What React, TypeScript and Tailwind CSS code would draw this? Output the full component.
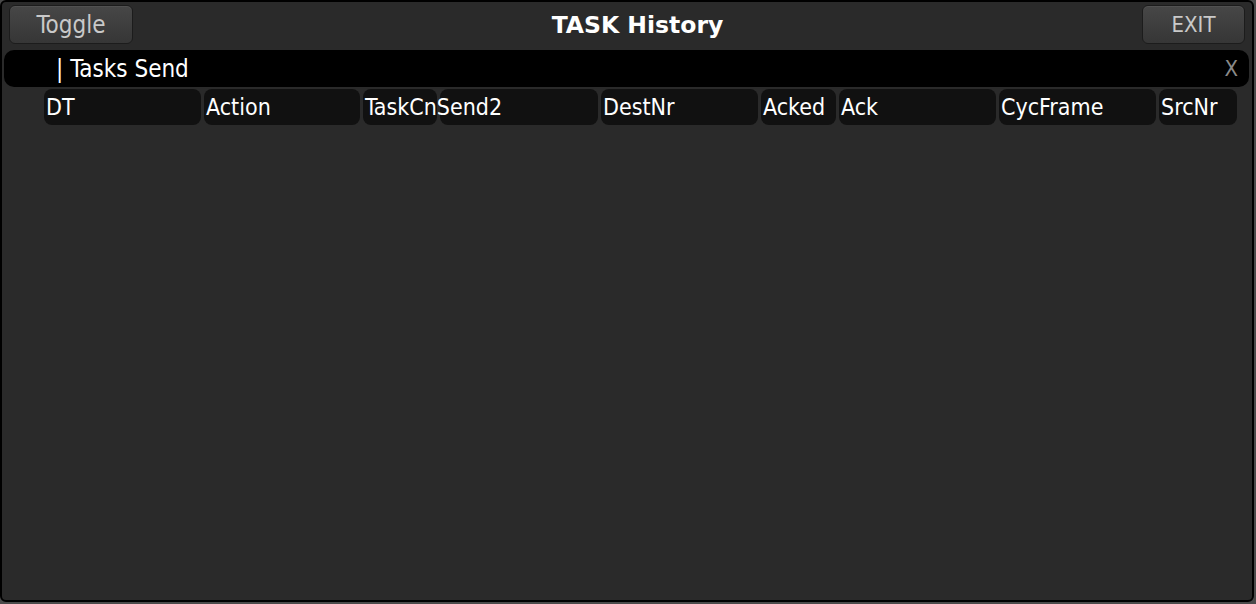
const COLUMNS = [
  { label: "DT", width: "w-[157px]" },
  { label: "Action", width: "w-[156px]" },
  { label: "TaskCnSend2", width: "w-[74px]" },
  { label: "", width: "w-[158px]" },
  { label: "DestNr", width: "w-[157px]" },
  { label: "Acked", width: "w-[75px]" },
  { label: "Ack", width: "w-[157px]" },
  { label: "CycFrame", width: "w-[157px]" },
  { label: "SrcNr", width: "w-[78px]" },
];

const FONT = "font-['DejaVu_Sans_Condensed','DejaVu_Sans',sans-serif]";

function ToolButton({
  label,
  width,
  size,
}: {
  label: string;
  width: string;
  size: string;
}) {
  return (
    <button
      className={`${width} ${size} h-[39px] shrink-0 rounded-md border border-[#1c1c1c] bg-gradient-to-b from-[#474747] to-[#363636] text-[#c9c9c9] shadow-[inset_0_1px_0_rgba(255,255,255,0.06)] ${FONT}`}
    >
      {label}
    </button>
  );
}

export default function App() {
  return (
    <div className="h-[604px] w-[1256px] overflow-hidden bg-[#4a4a4a]">
      <div className="flex h-[602px] w-[1254px] flex-col rounded-md border-2 border-black bg-[#2a2a2a]">
        <header className="flex h-[48px] items-start px-[7px] pt-[3px]">
          <ToolButton label="Toggle" width="w-[124px]" size="text-[24px]" />
          <h1 className="flex h-[39px] flex-1 items-center justify-center pt-[3px] font-['DejaVu_Sans',sans-serif] text-[23.5px] font-bold text-white">
            TASK History
          </h1>
          <ToolButton label="EXIT" width="w-[103px]" size="text-[22px]" />
        </header>

        <div className="ml-[2px] mr-[3px] flex h-[37px] items-center justify-between rounded-[10px] bg-black pl-[52px] pr-[11px]">
          <span className={`text-[24px] text-white ${FONT}`}>| Tasks Send</span>
          <span className={`text-[22px] text-[#8a8a8a] ${FONT}`}>X</span>
        </div>

        <div className="mt-[2px] flex gap-[3px] pl-[42px]">
          {COLUMNS.map((col, i) => (
            <div
              key={i}
              className={`${col.width} flex h-[36px] shrink-0 items-center whitespace-nowrap rounded-lg bg-[#111111] pl-[2px] text-[23px] text-white ${FONT}`}
            >
              <span className="relative z-20">{col.label}</span>
            </div>
          ))}
        </div>
      </div>
    </div>
  );
}
